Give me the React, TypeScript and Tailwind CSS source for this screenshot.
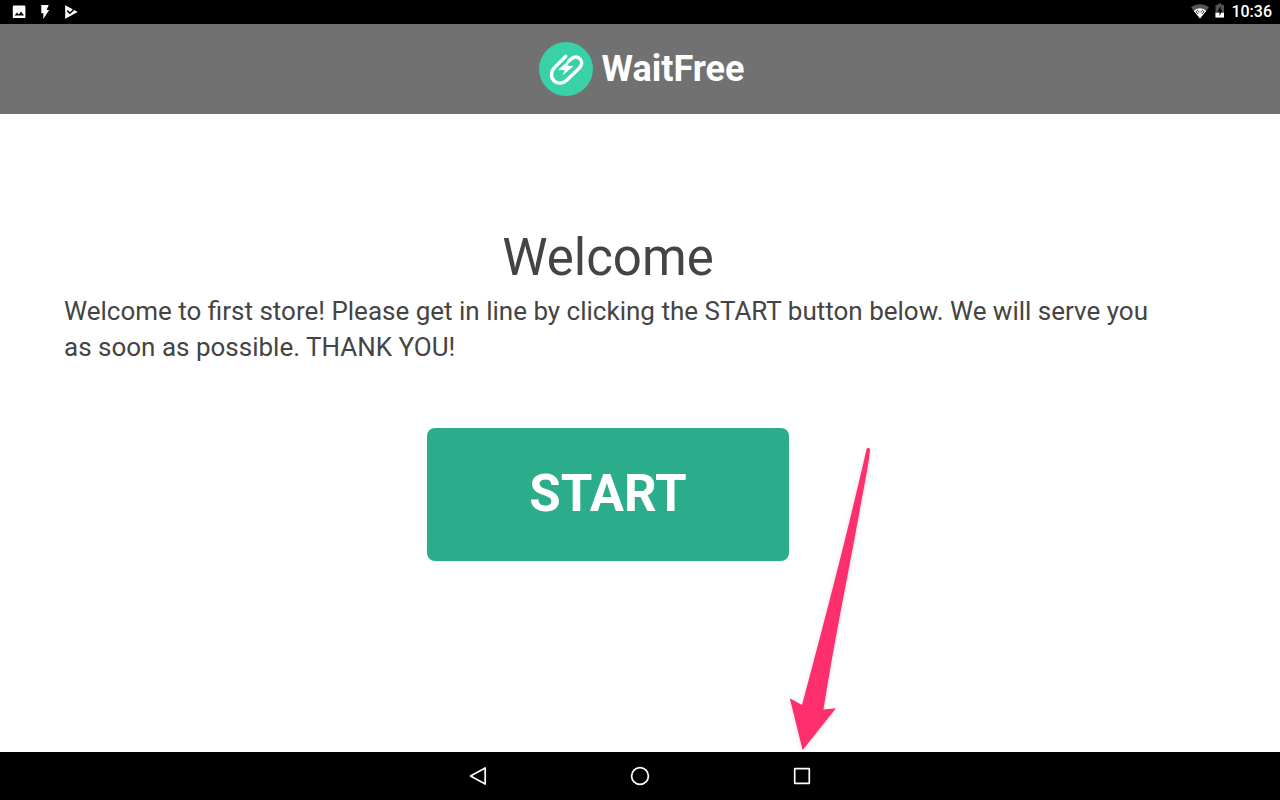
function StatusBar() {
  return (
    <div className="flex h-6 shrink-0 items-center justify-between bg-black pr-2 pl-3 text-white">
      <div className="flex items-center gap-2.5">
        <svg className="h-4 w-4" viewBox="0 0 16 16" role="img" aria-label="Screenshot saved">
          <path
            fill="#fff"
            fillRule="evenodd"
            d="M2 1.500h10.200a1.200 1.200 0 0 1 1.200 1.200v10.200a1.200 1.200 0 0 1-1.200 1.200H2a1.200 1.200 0 0 1-1.200-1.200V2.700A1.200 1.200 0 0 1 2 1.500zM2.500 11.500h9.500L9 7.400 6.800 10.400 5.100 8.500z"
          />
        </svg>
        <svg className="h-4 w-4" viewBox="0 0 16 16" role="img" aria-label="Charging">
          <path fill="#fff" d="M3.300 1h7.400L8.700 6h2.500L5.300 15V9.200H3.300z" />
        </svg>
        <svg className="h-4 w-4" viewBox="0 0 16 16" role="img" aria-label="Apps updated">
          <path fill="#fff" d="M1.200 1.300 13.700 8 1.200 14.700z" />
          <path d="m3.300 6.600 2.600 2.600 5.300-5.200" fill="none" stroke="#000" strokeWidth="1.600" />
        </svg>
      </div>
      <div className="flex items-center gap-1.5">
        <svg className="h-4.5 w-4.5" viewBox="0 0 18 18" role="img" aria-label="Wi-Fi">
          <path fill="#555" d="M0 4.500C5 .3 13 .3 18 4.500L9 15.500z" />
          <path fill="#fff" d="M2.800 7.900C6.200 4.500 11.800 4.500 15.200 7.900L9 15.500z" />
          <path d="m7 6.800-2 2 2 2M11 6.800l2 2-2 2" fill="none" stroke="#333" />
          <path d="M7 8.800h1M8.500 8.800h1M10 8.800h1" stroke="#333" />
        </svg>
        <svg className="h-4.5 w-2.5" viewBox="0 0 10 18" role="img" aria-label="Battery">
          <path fill="#555" d="M3 .5h3.500V2H9v12.500H.5V2H3z" />
          <path fill="#fff" d="M.5 9.800H9v4.700H.5z" />
          <path fill="#000" d="M5.700 3 2.300 8.800h2.200V13L7.500 7.200H5.700z" />
        </svg>
        <time className="text-base leading-6 font-medium">10:36</time>
      </div>
    </div>
  );
}

function Logo() {
  return (
    <svg className="h-14 w-14" viewBox="0 0 56 56" aria-hidden="true">
      <circle cx="28" cy="28" r="27" fill="#39d1a8" />
      <path
        d="M27.700 15.200 16.700 26.400C12.600 30.600 12.500 36.600 16.200 39.900C19.700 43.200 25 42.800 28.700 39.200L40.700 27.700C44.400 24.100 44.600 20.300 42 17.900C39.200 15.300 35.700 15.600 32.500 18.400L30.800 20"
        fill="none"
        stroke="#fff"
        strokeWidth="3.400"
        strokeLinecap="round"
        strokeLinejoin="round"
      />
      <path fill="#fff" d="M32.300 18.300 20.200 28.800l6.800.4-2.800 5.300 11.300-9.200-6.100-.5z" />
    </svg>
  );
}

function Pointer() {
  return (
    <svg
      className="pointer-events-none absolute bottom-0 left-1/2 ml-36 h-77 w-24"
      viewBox="0 0 96 308"
      aria-hidden="true"
    >
      <path
        d="M82.500 5.500C82.700 3.400 85.900 3.600 86.100 5.800C84 24 80 43 76 65C65 126 50 198 39.500 265.500L52 264.300 18.600 306 5.800 254.300 18 261C41 176 65 82 82.500 5.500Z"
        fill="#ff2f6d"
        className="drop-shadow-sm"
      />
    </svg>
  );
}

function NavigationBar() {
  return (
    <nav className="flex h-12 shrink-0 items-center justify-center bg-black" aria-label="System">
      <div className="grid w-full max-w-[486px] grid-cols-3">
        <button type="button" aria-label="Back" className="flex justify-center">
          <svg className="h-6 w-6" viewBox="0 0 24 24" fill="none" stroke="#fff" strokeWidth="1.700" strokeLinejoin="round">
            <path d="M19.200 3.900v16.200L4.500 12z" />
          </svg>
        </button>
        <button type="button" aria-label="Home" className="flex justify-center">
          <svg className="h-6 w-6" viewBox="0 0 24 24" fill="none" stroke="#fff" strokeWidth="1.700">
            <circle cx="12" cy="12" r="8.400" />
          </svg>
        </button>
        <button type="button" aria-label="Recent apps" className="flex justify-center">
          <svg className="h-6 w-6" viewBox="0 0 24 24" fill="none" stroke="#fff" strokeWidth="1.700" strokeLinejoin="round">
            <path d="M4.700 4.700h14.600v14.600H4.700z" />
          </svg>
        </button>
      </div>
    </nav>
  );
}

export default function App() {
  return (
    <div className="flex min-h-screen flex-col bg-white font-['Roboto',sans-serif] text-[#444]">
      <StatusBar />
      <header className="flex h-[90px] shrink-0 items-center justify-center gap-2 bg-[#717171] pl-0.5 text-white">
        <Logo />
        <span className="text-4xl font-bold">WaitFree</span>
      </header>
      <main className="relative flex grow flex-col items-center pt-27 pr-32 pl-16">
        <h1 className="text-[51px] leading-[71px]">Welcome</h1>
        <p className="w-full text-[26px] leading-9">
          Welcome to first store! Please get in line by clicking the START button below. We will serve you as soon as
          possible. THANK YOU!
        </p>
        <button
          type="button"
          className="mt-[63px] h-[133px] w-full max-w-[362px] rounded-lg bg-[#2bad8c] text-[51px] font-bold text-white"
        >
          START
        </button>
        <Pointer />
      </main>
      <NavigationBar />
    </div>
  );
}
